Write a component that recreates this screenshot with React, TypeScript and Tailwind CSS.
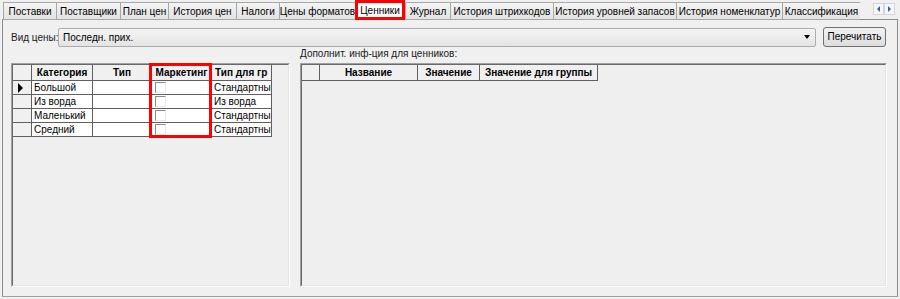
import React from "react";

const tabs: { label: string; w: number; active?: boolean }[] = [
  { label: "Поставки", w: 53 },
  { label: "Поставщики", w: 64 },
  { label: "План цен", w: 48 },
  { label: "История цен", w: 68 },
  { label: "Налоги", w: 43 },
  { label: "Цены форматов", w: 76 },
  { label: "Ценники", w: 50, active: true },
  { label: "Журнал", w: 45 },
  { label: "История штрихкодов", w: 103 },
  { label: "История уровней запасов", w: 123 },
  { label: "История номенклатур", w: 106 },
  { label: "Классификация", w: 78 },
];

const rows = [
  { cat: "Большой", grp: "Стандартны", sel: true },
  { cat: "Из ворда", grp: "Из ворда" },
  { cat: "Маленький", grp: "Стандартны" },
  { cat: "Средний", grp: "Стандартны" },
];

function Checkbox() {
  return (
    <div className="w-[11px] h-[11px] border-t border-l border-[#8a8a8a] border-b border-r border-b-[#e8e8e8] border-r-[#e8e8e8] bg-white" />
  );
}

function SunkenGrid({ children, className }: { children?: React.ReactNode; className?: string }) {
  return (
    <div className={"border border-[#a0a0a0] border-b-white border-r-white " + (className ?? "")}>
      <div className="h-full border border-[#696969] border-b-[#e3e3e3] border-r-[#e3e3e3] bg-[#efefef] overflow-hidden">
        {children}
      </div>
    </div>
  );
}

export default function App() {
  const hd = "h-[16px] border-r border-b border-[#5f5f5f] bg-[#f0f0f0] font-bold text-center leading-[15px] overflow-hidden whitespace-nowrap";
  const cell = "h-[14px] border-r border-b border-[#5f5f5f] bg-white leading-[13px] overflow-hidden whitespace-nowrap";
  return (
    <div
      className="w-[900px] h-[299px] bg-[#f0f0f0] text-[10px] text-black relative overflow-hidden"
      style={{ fontFamily: "Tahoma, 'Liberation Sans', 'DejaVu Sans', sans-serif" }}
    >
      {/* Tab strip */}
      <div className="flex items-start h-[19px] pl-[3px] relative">
        {tabs.map((t) =>
          t.active ? (
            <div
              key={t.label}
              className="h-[20px] border-[3px] border-[#ff0000] bg-white flex items-center justify-center whitespace-nowrap relative z-10 -mb-[1px]"
              style={{ width: t.w }}
            >
              {t.label}
            </div>
          ) : (
            <div
              key={t.label}
              className="h-[18px] mt-[2px] border border-[#a7a7a7] border-r-0 last:border-r bg-gradient-to-b from-[#f4f4f4] to-[#e3e3e3] flex items-center justify-center whitespace-nowrap overflow-hidden"
              style={{ width: t.w }}
            >
              {t.label}
            </div>
          )
        )}
        <div className="absolute right-[5px] top-[3px] flex">
          <div className="w-[11px] h-[12px] border border-[#d0d7e2] bg-[#f6f6f6] flex items-center justify-center">
            <div className="w-0 h-0 border-y-[3px] border-y-transparent border-r-[3px] border-r-[#3a5ea0]" />
          </div>
          <div className="w-[11px] h-[12px] border border-[#d0d7e2] bg-[#f6f6f6] flex items-center justify-center">
            <div className="w-0 h-0 border-y-[3px] border-y-transparent border-l-[3px] border-l-[#3a5ea0]" />
          </div>
        </div>
      </div>

      {/* Panel */}
      <div className="mx-[2px] h-[278px] border border-[#898c95] border-b-[#9da0a8] bg-[#f0f0f0] flex flex-col pl-[8px] pr-[9px]">
        {/* Toolbar */}
        <div className="flex items-center mt-[7px] h-[20px]">
          <div className="w-[47px] whitespace-nowrap text-[#1a1a1a]">Вид цены:</div>
          <div className="w-[758px] h-[19px] border border-[#acacac] rounded-[2px] bg-gradient-to-b from-[#f4f4f4] to-[#e4e4e4] flex items-center pl-[4px] pr-[5px]">
            <span className="flex-1">Последн. прих.</span>
            <div className="w-0 h-0 border-x-[3.5px] border-x-transparent border-t-[4px] border-t-black" />
          </div>
          <div className="ml-[7px] w-[63px] h-[20px] border border-[#707070] rounded-[3px] bg-gradient-to-b from-[#f2f2f2] to-[#dddddd] flex items-center justify-center -mt-[1px]">
            Перечитать
          </div>
        </div>

        {/* Label */}
        <div className="flex mt-[2px] h-[10px]">
          <div className="w-[289px]" />
          <div className="leading-[10px] whitespace-nowrap text-[#1a1a1a]">Дополнит. инф-ция для ценников:</div>
        </div>

        {/* Grids */}
        <div className="flex mt-[4px] h-[224px] gap-[10px]">
          <div className="relative w-[279px] h-full">
            <SunkenGrid className="w-full h-full">
              <div className="flex">
                <div className={hd + " w-[19px]"} />
                <div className={hd + " w-[61px]"}>Категория</div>
                <div className={hd + " w-[59px]"}>Тип</div>
                <div className={hd + " w-[60px]"}>Маркетинг</div>
                <div className={hd + " w-[60px] text-left pl-[3px]"}>Тип для гр</div>
              </div>
              {rows.map((r) => (
                <div className="flex" key={r.cat}>
                  <div className="w-[19px] h-[14px] border-r border-b border-[#5f5f5f] bg-[#f0f0f0] flex items-center pl-[5px]">
                    {r.sel && (
                      <div className="w-0 h-0 border-y-[5px] border-y-transparent border-l-[5px] border-l-black" />
                    )}
                  </div>
                  <div className={cell + " w-[61px] pl-[2px]"}>{r.cat}</div>
                  <div className={cell + " w-[59px]"} />
                  <div className={cell + " w-[60px] pl-[3px] pt-[1px]"}>
                    <Checkbox />
                  </div>
                  <div className={cell + " w-[60px] pl-[2px]"}>{r.grp}</div>
                </div>
              ))}
            </SunkenGrid>
            <div className="absolute left-[138px] top-0 w-[63px] h-[75px] border-[3px] border-[#ff0000]" />
          </div>
          <SunkenGrid className="w-[587px] h-full">
            <div className="flex">
              <div className={hd + " w-[18px]"} />
              <div className={hd + " w-[98px]"}>Название</div>
              <div className={hd + " w-[62px]"}>Значение</div>
              <div className={hd + " w-[118px]"}>Значение для группы</div>
            </div>
          </SunkenGrid>
        </div>
      </div>
    </div>
  );
}
